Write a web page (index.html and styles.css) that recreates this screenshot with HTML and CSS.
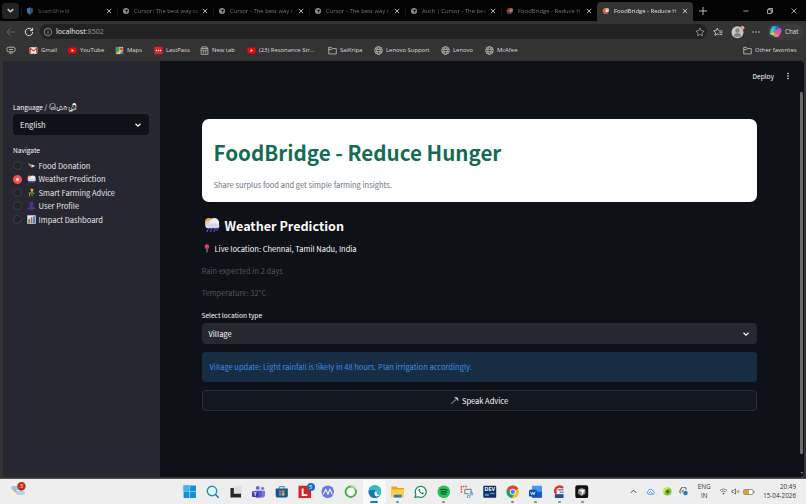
FILE: index.html
```html
<!DOCTYPE html>
<html lang="en">
<head>
    <meta charset="UTF-8">
    <meta name="viewport" content="width=device-width, initial-scale=1.0">
    <title>FoodBridge - Reduce Hunger</title>
    <link rel="stylesheet" href="styles.css">
</head>
<body>
    <!-- Shared icons -->
    <svg class="sprite">
        <symbol id="close" viewBox="0 0 8 8"><path d="M1.8 1.8l4.400 4.400M6.200 1.800l-4.400 4.400" fill="none" stroke="currentColor" stroke-width=".9"/></symbol>
        <symbol id="cursor" viewBox="0 0 8 8"><circle cx="4" cy="4" r="3" fill="#777"/><path d="M4 .8l2.800 1.600v3.200L4 7.200 1.200 5.600V2.400z" fill="#8a8a8a"/><path d="M2 2.800h4.200L4.100 6.200V4z" fill="#161616"/></symbol>
        <symbol id="bridge" viewBox="0 0 8 8"><circle cx="3.600" cy="4" r="3" fill="#e0693a"/><circle cx="5.300" cy="3" r="1.900" fill="#f3b389"/><path d="M1 5.200h5.600a3 3 0 0 1-5 1z" fill="#9b5c8d"/><circle cx="4.500" cy="4" r="1" fill="#fff"/></symbol>
        <symbol id="globe" viewBox="0 0 10 10"><g fill="none" stroke="#d0d0d0" stroke-width=".8"><circle cx="5" cy="5" r="4.300"/><ellipse cx="5" cy="5" rx="1.900" ry="4.300"/><path d="M1.100 3.600h7.800M1.100 6.400h7.800"/></g></symbol>
        <symbol id="folder" viewBox="0 0 10 10"><path d="M.8 8.800V1.500h3l1 1.300h4.400v6zM.8 4h3.200l.8-1.200" fill="none" stroke="#d0d0d0" stroke-width=".8" stroke-linejoin="round"/></symbol>
        <symbol id="youtube" viewBox="0 0 10 10"><rect x=".5" y="1.700" width="9" height="6.600" rx="1.800" fill="#f00"/><path d="M4 3.400v3.200L6.700 5z" fill="#fff"/></symbol>
        <symbol id="chevron" viewBox="0 0 8 8"><path d="M1.500 2.800L4 5.200l2.500-2.400" fill="none" stroke="currentColor" stroke-width="1.300"/></symbol>
        <symbol id="rain" viewBox="0 0 16 16"><circle cx="5" cy="5" r="4" fill="#f9a33a"/><circle cx="5" cy="7.500" r="3.800" fill="#d5d0e0"/><circle cx="10.300" cy="6" r="4.900" fill="#eeeaf5"/><rect x="1.500" y="6.500" width="14" height="4.800" rx="2.400" fill="#d9d3e6"/><path d="M4.500 11.300l-1.700 3.700M8 11.300L6.300 15M11.500 11.300L9.800 15M14 11l-1.300 2.800" stroke="#4b50df" stroke-width="1.200"/></symbol>
    </svg>

    <header class="tab-bar">
        <button class="tab-menu"><svg viewBox="0 0 8 8"><use href="#chevron"/></svg></button>
        <div class="tabs">
            <div class="tab first"><svg class="favicon" viewBox="0 0 8 8"><path d="M4 .4l3 1v2.800Q7 6.500 4 7.800 1 6.500 1 4.200V1.400z" fill="#2b5378"/><path d="M4 .4v7.400Q1 6.500 1 4.200V1.400z" fill="#41739b"/></svg><span>ScamShield</span><svg class="close"><use href="#close"/></svg></div>
            <div class="tab"><svg class="favicon"><use href="#cursor"/></svg><span>Cursor: The best way to</span><svg class="close"><use href="#close"/></svg></div>
            <div class="tab"><svg class="favicon"><use href="#cursor"/></svg><span>Cursor - The best way t</span><svg class="close"><use href="#close"/></svg></div>
            <div class="tab"><svg class="favicon"><use href="#cursor"/></svg><span>Cursor - The best way t</span><svg class="close"><use href="#close"/></svg></div>
            <div class="tab"><svg class="favicon"><use href="#cursor"/></svg><span>Auth | Cursor - The bes</span><svg class="close"><use href="#close"/></svg></div>
            <div class="tab"><svg class="favicon dim"><use href="#bridge"/></svg><span>FoodBridge - Reduce H</span><svg class="close"><use href="#close"/></svg></div>
            <div class="tab active"><svg class="favicon"><use href="#bridge"/></svg><span>FoodBridge - Reduce H</span><svg class="close"><use href="#close"/></svg></div>
        </div>
        <svg class="new-tab" viewBox="0 0 10 10"><path d="M5 1v8M1 5h8" stroke="#ccc" stroke-width=".9"/></svg>
        <div class="window-buttons">
            <svg viewBox="0 0 8 8"><path d="M1.300 4h5.200" stroke="#bbb" stroke-width=".8"/></svg>
            <svg viewBox="0 0 8 8"><path d="M1.500 2.700h3.800v3.800H1.500zM2.700 2.700V1.500h3.800v3.800H5.300" fill="none" stroke="#ccc" stroke-width=".8"/></svg>
            <svg viewBox="0 0 8 8"><path d="M1.500 1.500l5 5M6.500 1.500l-5 5" stroke="#ccc" stroke-width=".8"/></svg>
        </div>
    </header>

    <div class="toolbar">
        <svg class="back" viewBox="0 0 10 10"><path d="M9 5H1.200M4.500 1.500L1 5l3.500 3.500" fill="none" stroke="#666" stroke-width=".9"/></svg>
        <svg class="reload" viewBox="0 0 10 10"><path d="M8.300 3.300A3.700 3.700 0 1 0 8.700 5M8.600 1v2.600H6" fill="none" stroke="#ddd" stroke-width="1"/></svg>
        <div class="address">
            <svg viewBox="0 0 10 10"><circle cx="5" cy="5" r="3.800" fill="none" stroke="#999" stroke-width=".8"/><path d="M5 4.300v2.900M5 2.800v.8" stroke="#999" stroke-width=".8"/></svg>
            <div class="url"><b>localhost</b>:8502</div>
            <svg viewBox="0 0 10 10"><path d="M5 1l1.200 2.700 2.900.3-2.200 2 .6 2.900L5 7.400 2.500 8.900 3.100 6 .9 4l2.900-.3z" fill="none" stroke="#aaa" stroke-width=".7"/></svg>
        </div>
        <svg class="fav" viewBox="0 0 10 10"><path d="M6.500 7.800L4.300 6.900 2 8.300l.5-2.700L.7 3.900l2.500-.4 1.100-2.400 1.200 2.400M6 4h3.500M6.400 5.800h3.100M7.200 7.500h2" fill="none" stroke="#ddd" stroke-width=".8"/></svg>
        <svg class="profile" viewBox="0 0 14 14"><circle cx="6.500" cy="7.200" r="6" fill="#c9c6c2"/><circle cx="6.500" cy="5.500" r="2.200" fill="#858585"/><path d="M2.800 11q0-3 3.700-3t3.700 3q-3.700 2.300-7.400 0z" fill="#858585"/><circle cx="11.500" cy="2.700" r="2" fill="#e9928b"/></svg>
        <svg class="more" viewBox="0 0 10 10"><g fill="#ddd"><circle cx="2" cy="5" r=".7"/><circle cx="5" cy="5" r=".7"/><circle cx="8" cy="5" r=".7"/></g></svg>
        <div class="chat">
            <svg viewBox="0 0 12 12"><path d="M4 1h4L6 8Q5.500 10 3.500 9.500L1.500 9Q0 8 .8 6L2 2.500Q2.500 1 4 1z" fill="#279ee6"/><path d="M1 6L3.800 1.500 5 5l-1 4.500-2.500-.8z" fill="#46c99a"/><path d="M1 8l3-1.500L5.500 8 4 10z" fill="#f2c33b"/><path d="M8 11H4.500L6.300 4Q7 2.300 8.500 2.500l2 .5Q12 4 11.300 6L10 9.500Q9.500 11 8 11z" fill="#e4569c"/><path d="M7.300 1q1.500 0 2 1.700L6.800 4.500 5.800 2z" fill="#2b61d9"/><path d="M4.500 11l1-4 2.500 1.500L8 11z" fill="#f38553"/><path d="M8.500 2.500l2 .5Q12 4 11.300 6L8 5z" fill="#a55be0"/></svg>
            <span>Chat</span>
        </div>
    </div>

    <nav class="bookmarks">
        <svg class="apps" viewBox="0 0 10 10"><rect x=".8" y="2.200" width="8.400" height="4.600" rx="2" fill="none" stroke="#bbb" stroke-width=".9"/><path d="M3 4.500h4M3 8h4" stroke="#bbb" stroke-width=".9"/></svg>
        <a class="bm gmail"><svg viewBox="0 0 10 10"><rect x=".7" y="1.500" width="8.600" height="7" rx=".8" fill="#eee"/><path d="M1.500 8V2.500L5 5.500l3.500-3V8" fill="none" stroke="#d8463c" stroke-width="1.300"/></svg>Gmail</a>
        <a class="bm yt"><svg><use href="#youtube"/></svg>YouTube</a>
        <a class="bm maps"><svg viewBox="0 0 10 10"><path d="M1 1h8v8H1z" fill="#e7e7e0"/><path d="M1 1h4v5L1 9z" fill="#39a45b"/><path d="M1 9l7-7 1 1v1L4 9z" fill="#f2c541"/><path d="M5 9l4-5v5z" fill="#4b82db"/><circle cx="7" cy="3" r="1.700" fill="#dc473c"/></svg>Maps</a>
        <a class="bm lastpass"><svg viewBox="0 0 10 10"><rect x=".5" y=".8" width="9" height="8.400" rx=".5" fill="#d9262b"/><g fill="#fff"><circle cx="2.600" cy="5" r=".8"/><circle cx="5" cy="5" r=".8"/><circle cx="7.400" cy="5" r=".8"/></g></svg>LastPass</a>
        <a class="bm newtab"><svg viewBox="0 0 10 10"><path d="M1.200 2.800h7.600V9.300H1.200zM2.200 2.800V1h5.600v1.800M1.200 4.700h7.600M3 6.200h1.500M5.500 6.200H7M3 7.700h1.500M5.500 7.700H7" fill="none" stroke="#ccc" stroke-width=".8"/></svg>New tab</a>
        <a class="bm resonance"><svg><use href="#youtube"/></svg>(23) Resonance Str...</a>
        <a class="bm saikripa"><svg><use href="#folder"/></svg>SaiKripa</a>
        <a class="bm support"><svg><use href="#globe"/></svg>Lenovo Support</a>
        <a class="bm lenovo"><svg><use href="#globe"/></svg>Lenovo</a>
        <a class="bm mcafee"><svg><use href="#globe"/></svg>McAfee</a>
        <a class="bm other"><svg><use href="#folder"/></svg>Other favorites</a>
    </nav>

    <div class="page">
        <div class="app">
            <aside class="sidebar">
                <label class="label">Language / <span class="tamil">மொழி</span></label>
                <div class="select select-dark"><span>English</span><svg><use href="#chevron"/></svg></div>
                <label class="label nav-label">Navigate</label>
                <div class="radio"><i></i><svg viewBox="0 0 10 10"><path d="M1 2.500l4 1.500L9.500 5.500 5 7.500z" fill="#c9b8a8"/><path d="M1 2.500l3.500 1.200-1.500 2.300z" fill="#3e9c54"/><path d="M2.300 5.500L5 4.500l.5 2.600z" fill="#c4385c"/><circle cx="6.300" cy="5.200" r="1.100" fill="#eee"/></svg><span>Food Donation</span></div>
                <div class="radio checked"><i></i><svg><use href="#rain"/></svg><span>Weather Prediction</span></div>
                <div class="radio"><i></i><svg viewBox="0 0 10 10"><path d="M3 2.200h4.800L6.500.800h-2z" fill="#d89b2c"/><circle cx="5.500" cy="3" r="1.300" fill="#e8b355"/><path d="M4 4.400h3L6.800 9.300H5.700V7h-.5v2.300H4.200z" fill="#4b7a3c"/><path d="M2.600 6.300l1.500-1.500M7 5l1 1.500" stroke="#e0a83c"/><path d="M2.800 9.500V5" stroke="#e0b33c" stroke-width=".7"/></svg><span>Smart Farming Advice</span></div>
                <div class="radio"><i></i><svg viewBox="0 0 10 10"><path d="M5 .6q2.300 0 2.300 2.600T5.800 6.500q3.500.3 3.500 2.900H.7q0-2.600 3.500-2.900Q2.700 5.800 2.700 3.200T5 .6z" fill="#51308d"/></svg><span>User Profile</span></div>
                <div class="radio"><i></i><svg viewBox="0 0 10 10"><rect x=".3" y=".3" width="9.400" height="9.400" fill="#e0e1ec"/><path d="M1.300 4.500h2V9h-2z" fill="#41a458"/><path d="M4.100 2.500h2V9h-2z" fill="#d64b5c"/><path d="M6.900 1.500h2V9h-2z" fill="#3b81c9"/></svg><span>Impact Dashboard</span></div>
            </aside>

            <main class="main">
                <div class="app-header">
                    <span>Deploy</span>
                    <svg viewBox="0 0 10 10"><g fill="#eee"><circle cx="5" cy="1.800" r="1"/><circle cx="5" cy="5" r="1"/><circle cx="5" cy="8.200" r="1"/></g></svg>
                </div>
                <div class="container">
                    <section class="hero">
                        <h1>FoodBridge - Reduce Hunger</h1>
                        <p>Share surplus food and get simple farming insights.</p>
                    </section>
                    <h2><svg><use href="#rain"/></svg><span>Weather Prediction</span></h2>
                    <p class="location"><svg viewBox="0 0 8 10"><path d="M4 4v5.500" stroke="#a9a9b5" stroke-width="1"/><circle cx="4" cy="3" r="2.600" fill="#dd2e57"/><circle cx="3.300" cy="2.200" r=".8" fill="#f589a0"/></svg><span>Live location: Chennai, Tamil Nadu, India</span></p>
                    <p class="muted"><span>Rain expected in 2 days</span></p>
                    <p class="muted"><span>Temperature: 32°C</span></p>
                    <label class="label">Select location type</label>
                    <div class="select"><span>Village</span><svg><use href="#chevron"/></svg></div>
                    <div class="alert"><span>Village update: Light rainfall is likely in 48 hours. Plan irrigation accordingly.</span></div>
                    <button class="speak"><svg viewBox="0 0 10 10"><path d="M.8 8.500L6 3.500l1 1L1.500 9.200z" fill="#8b8893"/><path d="M4.500 2q2-1.500 3.800-.300 1.700 1.500.7 4.100L7.500 4.200 6.200 2.900z" fill="#c0bcc9"/></svg><span>Speak Advice</span></button>
                </div>
                <div class="scrollbar"></div>
                <div class="scroll-arrow"></div>
            </main>
        </div>
    </div>

    <footer class="taskbar">
        <svg class="weather" viewBox="0 0 16 16"><path d="M4 8q4 4 8 0a4.500 4.500 0 0 1-8 0z" fill="#f2992c" stroke="#f2992c" stroke-width="1.500"/><rect x="1" y="4" width="9" height="4" rx="2" fill="#9fc2e9"/><rect x="6" y="9" width="9" height="4" rx="2" fill="#b6d2f2"/><circle cx="11.500" cy="4.200" r="4.200" fill="#c42b1c"/><text x="11.500" y="6.300" text-anchor="middle" class="badge-text">3</text></svg>
        <div class="task-icons">
            <div class="task"><svg viewBox="0 0 14 14"><path d="M.6.6h6.100v6.100H.6zM7.300.6h6.100v6.100H7.300zM.6 7.300h6.100v6.100H.6zM7.300 7.300h6.100v6.100H7.300z" fill="#1590dc"/><path d="M.6.6h6.100v6.100H.6z" fill="#3fb3ec"/></svg></div>
            <div class="task"><svg viewBox="0 0 14 14"><circle cx="6.200" cy="6.200" r="4.900" fill="#dff4fb" stroke="#2190b5" stroke-width="1.500"/><path d="M9.800 9.800l3.500 3.500" stroke="#2a6fb5" stroke-width="1.600"/></svg></div>
            <div class="task"><svg viewBox="0 0 14 14"><path d="M4 1.500h9v9H4z" fill="#ddd"/><path d="M1.500 3H5v6h7.500v4h-11z" fill="#292929"/></svg></div>
            <div class="task"><svg viewBox="0 0 14 14"><circle cx="6" cy="3" r="2" fill="#6563d6"/><circle cx="11" cy="3.500" r="1.700" fill="#7c7be8"/><path d="M8 6h5.500v4q0 3-3 3H8z" fill="#7875e5"/><path d="M3 6h7v4q0 3.300-3.500 3.300T3 10z" fill="#5b58cc"/><rect y="6.500" width="6.500" height="6" rx="1" fill="#423bb0"/><path d="M1.800 8h3M3.300 8v3.300" stroke="#fff" stroke-width=".9"/></svg></div>
            <div class="task"><svg viewBox="0 0 14 14"><path d="M4.500 4V1.700h5V4" fill="none" stroke="#2087c6" stroke-width="1"/><path d="M.7 3.500h12.600V11q0 2-2 2H2.700q-2 0-2-2z" fill="#17568f"/><path d="M4.200 5.500h2.500V8H4.200z" fill="#ef5a31"/><path d="M7.300 5.500h2.500V8H7.300z" fill="#88bf36"/><path d="M4.200 8.500h2.500V11H4.200z" fill="#27a7e9"/><path d="M7.300 8.500h2.500V11H7.300z" fill="#f8bf26"/></svg></div>
            <div class="task"><svg viewBox="0 0 14 14"><rect x=".5" y=".8" width="13" height="13" fill="#d7232b"/><path d="M4.800 3.500v7h5" fill="none" stroke="#fff" stroke-width="2"/></svg><span class="badge">5</span></div>
            <div class="task"><svg viewBox="0 0 14 14"><circle cx="7" cy="7" r="6.500" fill="#6979df"/><path d="M2.300 9.500L5 4.500l2.200 5 2-5 2.500 5" fill="none" stroke="#fff" stroke-width="1.100"/></svg></div>
            <div class="task"><svg viewBox="0 0 14 14"><circle cx="7" cy="7" r="5.400" fill="#f8f8f8" stroke="#4aae43" stroke-width="2"/><path d="M7 1.600a5.400 5.400 0 0 1 4.700 2.700" fill="none" stroke="#a7d69a" stroke-width="2"/></svg></div>
            <div class="task current"><svg viewBox="0 0 14 14"><circle cx="7" cy="7" r="6.600" fill="#1673ba"/><path d="M.6 6A6.500 6.500 0 0 1 13.600 7q0 3-3.600 3-2 0-1.700-1.600Q9 5 5.500 5 2.500 5 .6 6z" fill="#37bdba"/><path d="M7.500 6.500q2 .2 1.500 2-.2 1.300 1.500 1.500 1.500.1 2.500-.6Q11 12 8.500 12 5.500 10 7.500 6.500z" fill="#edf7fb"/></svg></div>
            <div class="task open"><svg viewBox="0 0 14 14"><path d="M.5 1.500h5L7 3h6.500v9H.5z" fill="#e8a31c"/><path d="M.5 4.500h13v8.500H.5z" fill="#fbd04b"/><path d="M3 10h8v3H3z" fill="#2480c5"/></svg></div>
            <div class="task"><svg viewBox="0 0 14 14"><path d="M1 13l.9-3.300A5.700 5.700 0 1 1 4.400 12.200z" fill="#fff" stroke="#27885a" stroke-width="1.300"/><path d="M4.500 4.300q0 4 5 5.500l1-1.500-1.700-.9-.9.8L6 6.300l.7-1-.8-1.500z" fill="#27885a"/></svg></div>
            <div class="task open"><svg viewBox="0 0 14 14"><circle cx="7" cy="7" r="6.500" fill="#1fc35c"/><path d="M3.300 5q4-1.200 7.500.5M3.700 7.300q3.500-1 6.500.4M4 9.300q3-.7 5.400.4" fill="none" stroke="#123c24" stroke-width="1.100"/></svg></div>
            <div class="task"><svg viewBox="0 0 14 14"><path d="M1.500 8V1.500H8" fill="none" stroke="#d65a4d" stroke-width="1.500" stroke-dasharray="1.800 .8"/><path d="M5 4.500h6.500V9M5 4.500V9h4" fill="none" stroke="#898c91" stroke-width="1.300"/><circle cx="12" cy="9" r="1.400" fill="none" stroke="#3d93ce"/><circle cx="9" cy="12" r="1.400" fill="none" stroke="#3d93ce"/></svg></div>
            <div class="task"><svg viewBox="0 0 14 14"><rect x=".3" y=".8" width="13.400" height="12.400" rx="1" fill="#102f64"/><text x="7" y="6.700" text-anchor="middle" class="dev">DEV</text><path d="M2 9h4v2.500H2zM7 8h5v1.500H7z" fill="#3f91cd"/></svg></div>
            <div class="task open"><svg viewBox="0 0 14 14"><circle cx="7" cy="7" r="6.500" fill="#f2be2f"/><path d="M1.300 3.900A6.500 6.500 0 0 0 6.300 13.500L9 8z" fill="#2f9e58"/><path d="M1.300 3.900a6.500 6.500 0 0 1 11.400 0L7 7z" fill="#db4437"/><circle cx="7" cy="7" r="3" fill="#fff"/><circle cx="7" cy="7" r="2.300" fill="#4683e8"/></svg></div>
            <div class="task open"><svg viewBox="0 0 14 14"><rect x="3" y=".8" width="10.500" height="12.400" rx="1" fill="#3f9cf0"/><path d="M3 7h10.500v5q0 1.200-1 1.200H4q-1 0-1-1.200z" fill="#185abd"/><rect y="5" width="8" height="7" rx="1" fill="#134da8"/><path d="M1.700 7l1.100 3.200L4 7.500l1.200 2.700L6.300 7" fill="none" stroke="#fff" stroke-width=".8"/></svg></div>
            <div class="task open"><svg viewBox="0 0 14 14"><path d="M11.500 3Q8 .2 4.500 3 2 6.500 4.500 9" fill="none" stroke="#d9372d" stroke-width="2.600"/><path d="M6 5h6M8 7.500h4" stroke="#6f91be" stroke-width="1.600"/><rect x="3" y="9.500" width="9" height="4" fill="#274c8f"/></svg></div>
            <div class="task open"><svg viewBox="0 0 14 14"><rect x=".3" y=".3" width="13.400" height="13.400" rx="2.200" fill="#111"/><path d="M7 2.800l3.800 2.100v4.300L7 11.300 3.200 9.200V4.900z" fill="#8b8b8b"/><path d="M3.500 5h7L7 11V7z" fill="#fff"/></svg></div>
        </div>
        <div class="tray">
            <svg class="up" viewBox="0 0 10 10"><path d="M2 6.500L5 3.500l3 3" fill="none" stroke="#333"/></svg>
            <svg class="cloud" viewBox="0 0 10 10"><path d="M2.500 8a2 2 0 0 1 0-3.500 2.600 2.600 0 0 1 5-.2A1.900 1.900 0 0 1 8 8zM3 7l2-2 2.300 2.500" fill="#fff" stroke="#3478e5" stroke-width=".9"/></svg>
            <svg class="green" viewBox="0 0 10 10"><circle cx="5" cy="5" r="4.500" fill="#8cc62d"/><path d="M1 7A4.500 4.500 0 0 1 7 1z" fill="#e6df30"/><path d="M5 2.800v4.400M2.800 5h4.400" stroke="#166b36" stroke-width="1.500"/></svg>
            <svg class="sync" viewBox="0 0 10 10"><path d="M2 7a2.300 2.300 0 0 1 0-4 3 3 0 0 1 6 0M3 6l2-3" fill="none" stroke="#686868" stroke-width="1.200"/><circle cx="7.200" cy="6.800" r="2.500" fill="#197bd1"/></svg>
            <div class="lang">ENG<br>IN</div>
            <svg class="wifi" viewBox="0 0 10 10"><path d="M1 4q4-3.500 8 0M2.500 5.500q2.500-2 5 0" fill="none" stroke="#777" stroke-width="1"/><circle cx="5" cy="7.300" r="1" fill="#555"/></svg>
            <svg class="sound" viewBox="0 0 10 10"><path d="M1 4h1.500L5 2v6L2.500 6H1zM6.500 3.800l2.500 2.500M9 3.800L6.500 6.300" fill="none" stroke="#555" stroke-width=".8"/></svg>
            <svg class="battery" viewBox="0 0 12 8"><rect x=".6" y="1.500" width="9.500" height="5" rx="1.200" fill="#fff" stroke="#777" stroke-width=".8"/><rect x="1" y="2" width="5" height="4" fill="#e0a12b"/><path d="M11 3v2" stroke="#777"/></svg>
            <div class="clock">20:49<br>15-04-2026</div>
        </div>
    </footer>
</body>
</html>
```

FILE: styles.css
```css
* {
    margin: 0;
    padding: 0;
    box-sizing: border-box;
}

body {
    width: 806px;
    height: 504px;
    overflow: hidden;
    background-color: #333;
    color: #ddd;
    font-family: 'Open Sans', 'Noto Sans', sans-serif;
    font-size: 6.2px;
}

svg {
    display: block;
    flex: none;
}

.sprite {
    position: absolute;
    width: 0;
    height: 0;
}

/* Tab bar */
.tab-bar {
    display: flex;
    align-items: center;
    height: 21px;
    background-color: #030303;
}

.tab-menu {
    display: flex;
    align-items: center;
    justify-content: center;
    width: 17px;
    height: 16px;
    margin: 0 2px;
    border: none;
    border-radius: 4px;
    background-color: #242424;
    color: #ccc;
}

.tab-menu svg {
    width: 9px;
    height: 9px;
}

.tabs {
    display: flex;
    align-self: stretch;
}

.tab {
    position: relative;
    display: flex;
    align-items: center;
    width: 96px;
    padding-left: 5px;
    color: #777;
    font-size: 5.9px;
}

.tab::before {
    content: '';
    position: absolute;
    left: 0;
    width: 1px;
    height: 8px;
    background-color: #181818;
}

.tab.first {
    color: #5b5b5b;
}

.tab span {
    width: 67px;
    margin-left: 4px;
    white-space: nowrap;
    -webkit-mask-image: linear-gradient(to right, #000 85%, rgba(0, 0, 0, 0.2));
    mask-image: linear-gradient(to right, #000 85%, rgba(0, 0, 0, 0.2));
}

.tab.active {
    height: 19px;
    margin-top: 2px;
    padding-bottom: 2px;
    border-radius: 4px 4px 0 0;
    background-color: #333;
    color: #e2e2e2;
}

.tab.active::before {
    display: none;
}

.favicon,
.close {
    width: 8px;
    height: 8px;
}

.close {
    color: #ccc;
}

.dim {
    opacity: 0.6;
}

.new-tab {
    width: 10px;
    height: 10px;
    margin-left: 5px;
}

.window-buttons {
    display: flex;
    gap: 16px;
    margin-left: auto;
    padding-right: 8px;
}

.window-buttons svg {
    width: 8px;
    height: 8px;
}

/* Toolbar */
.toolbar {
    display: flex;
    align-items: center;
    height: 21px;
    padding-left: 6px;
}

.back,
.reload {
    width: 10px;
    height: 10px;
}

.reload {
    margin-left: 8px;
}

.address {
    display: flex;
    align-items: center;
    width: 667px;
    height: 15px;
    margin-left: 6px;
    padding: 0 2px 0 3px;
    border-radius: 8px;
    background-color: #222;
}

.address svg {
    width: 10px;
    height: 10px;
}

.url {
    flex: 1;
    margin-left: 3px;
    padding-bottom: 1px;
    color: #999;
    font-size: 7.1px;
}

.url b {
    color: #eee;
    font-weight: 400;
}

.fav {
    width: 10px;
    height: 10px;
    margin-left: 6px;
}

.profile {
    width: 14px;
    height: 14px;
    margin-left: 8px;
}

.more {
    width: 10px;
    height: 10px;
    margin-left: 6px;
}

.chat {
    display: flex;
    align-items: center;
    width: 36px;
    height: 16px;
    margin-left: 6px;
    padding-left: 2px;
    border-radius: 8px;
    background-color: #3c3c3c;
}

.chat svg {
    width: 13px;
    height: 13px;
    margin-right: 3px;
}

/* Bookmarks */
.bookmarks {
    display: flex;
    align-items: center;
    height: 18px;
    padding: 0 9.5px 2px 6px;
    font-size: 5.9px;
}

.apps {
    width: 10px;
    height: 10px;
    margin-right: 13px;
}

.bm {
    display: flex;
    align-items: center;
    white-space: nowrap;
}

.bm svg {
    width: 9px;
    height: 9px;
    margin-right: 3px;
}

.gmail { width: 39px; }
.yt { width: 47px; }
.maps { width: 39px; }
.lastpass { width: 46px; }
.newtab { width: 47px; }
.resonance { width: 81px; }
.saikripa { width: 46px; }
.support { width: 67px; }
.lenovo { width: 44px; }

.other {
    margin-left: auto;
}

/* App */
.page {
    height: 419px;
    padding: 1px 2px 1px 3px;
    border-bottom: 1px solid #555;
}

.app {
    display: flex;
    height: 416px;
    border-radius: 4px;
    overflow: hidden;
    background-color: #0e1117;
    color: #fafafa;
    font-family: 'Noto Sans CJK SC', sans-serif;
    font-size: 7.5px;
}

.sidebar {
    width: 156.5px;
    padding: 39.5px 10.5px 0 10px;
    background-color: #262730;
}

.label {
    display: block;
    height: 10px;
    font-size: 6.6px;
    line-height: 10px;
    white-space: nowrap;
}

.tamil {
    font-size: 8.6px;
}

.select {
    display: flex;
    align-items: center;
    justify-content: space-between;
    height: 21px;
    margin-top: 3px;
    padding: 0 7px;
    border-radius: 4px;
    background-color: #262730;
}

.select svg {
    width: 8px;
    height: 8px;
}

.select-dark {
    margin-top: 3.5px;
    background-color: #0e1117;
}

.nav-label {
    margin: 10px 0 4px;
}

.radio {
    display: flex;
    align-items: center;
    height: 13.4px;
    line-height: 13.4px;
    color: #e6e6e8;
}

.radio i {
    width: 9px;
    height: 9px;
    border: 1px solid #3b3c45;
    border-radius: 50%;
    background-color: #22232b;
}

.radio.checked i {
    border: 3px solid #ff4b4b;
    background-color: #fff;
}

.radio svg {
    width: 9px;
    height: 9px;
    margin: 0 3px 0 4.5px;
}

.main {
    position: relative;
    flex: 1;
}

.app-header {
    display: flex;
    align-items: center;
    justify-content: flex-end;
    height: 31px;
    padding: 0 11.5px 1px 0;
    font-size: 6.6px;
}

.app-header svg {
    width: 10px;
    height: 8px;
    margin-left: 8.5px;
}

.container {
    width: 555px;
    margin: 27px 0 0 42px;
}

.hero {
    height: 83px;
    padding: 11px 12px;
    border-radius: 7px;
    background-color: #fff;
}

.hero h1 {
    color: #146c54;
    font-size: 20.6px;
    font-weight: 700;
    line-height: 44px;
}

.hero p {
    margin-top: 1px;
    color: #6b7280;
    font-size: 7.5px;
    line-height: 20px;
}

h2 {
    display: flex;
    align-items: center;
    height: 30px;
    margin-top: 8px;
    font-size: 12.6px;
    font-weight: 700;
}

h2 svg {
    width: 16px;
    height: 16px;
    margin: 0 5px 0 2px;
}

.location {
    display: flex;
    align-items: center;
    height: 14px;
    margin-top: 1px;
}

.location svg {
    width: 8px;
    height: 9px;
    margin: 0 4px 0 1px;
}

.muted {
    height: 14px;
    margin-top: 8px;
    color: #50545d;
    line-height: 14px;
}

.location + .muted {
    margin-top: 9px;
}

.container .label {
    margin-top: 9.5px;
}

.container .select {
    margin-top: 3.5px;
}

.alert {
    height: 30px;
    margin-top: 8px;
    padding: 0 8px;
    border-radius: 4px;
    background-color: #172d43;
    color: #3d8ee8;
    font-size: 7.52px;
    line-height: 30px;
}

.speak {
    display: flex;
    align-items: center;
    justify-content: center;
    width: 100%;
    height: 21px;
    margin-top: 8px;
    border: 1px solid #2b2d36;
    border-radius: 4px;
    background-color: #131720;
    color: #fafafa;
    font: inherit;
}

.speak svg {
    width: 9px;
    height: 9px;
    margin-right: 3px;
}

.scrollbar {
    position: absolute;
    top: 31px;
    right: 1px;
    width: 3px;
    height: 362px;
    border-radius: 1px;
    background-color: #686a6d;
}

.scroll-arrow {
    position: absolute;
    right: 1px;
    bottom: 2px;
    border: 1.5px solid transparent;
    border-top: 2px solid #999;
}

/* Taskbar */
.taskbar {
    display: flex;
    align-items: center;
    height: 25px;
    background-color: #eee;
    color: #333;
}

.weather {
    width: 16px;
    height: 16px;
    margin: 0 0 3px 10px;
}

.badge-text {
    fill: #fff;
    font-size: 6px;
}

.task-icons {
    display: flex;
    margin-left: 152px;
}

.task {
    position: relative;
    display: flex;
    align-items: center;
    justify-content: center;
    width: 23.1px;
    height: 24px;
}

.task svg {
    width: 13.5px;
    height: 13.5px;
}

.current {
    border-radius: 3px;
    background-color: #fafafa;
}

.open::after,
.current::after {
    content: '';
    position: absolute;
    bottom: 1px;
    width: 3px;
    height: 1.5px;
    border-radius: 1px;
    background-color: #888;
}

.current::after {
    width: 8px;
    background-color: #1478c8;
}

.badge {
    position: absolute;
    top: 3px;
    right: 2px;
    width: 8px;
    height: 8px;
    border-radius: 50%;
    background-color: #1673bd;
    color: #fff;
    font-size: 5.5px;
    line-height: 8px;
    text-align: center;
}

.dev {
    fill: #fff;
    font-size: 5.5px;
    font-weight: 700;
}

.tray {
    display: flex;
    align-items: center;
    margin-left: auto;
    padding-right: 10px;
    font-size: 6.3px;
    line-height: 8.4px;
}

.tray svg {
    width: 9px;
    height: 9px;
}

.tray .cloud,
.tray .green,
.tray .sync {
    margin-left: 7.6px;
}

.lang {
    width: 16px;
    margin: 0 6.5px 0 8px;
    text-align: center;
}

.tray .sound {
    margin-left: 3px;
}

.tray .battery {
    width: 12px;
    height: 8px;
    margin-left: 3.5px;
}

.clock {
    margin-left: 8px;
    text-align: right;
}
```
